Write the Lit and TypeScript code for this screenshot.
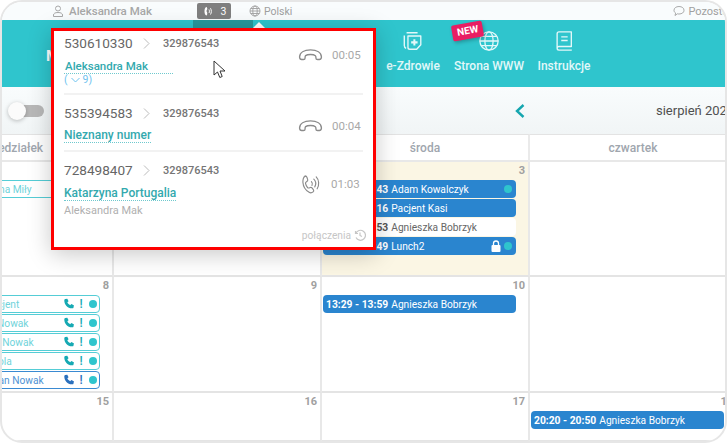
import { LitElement, html, css, svg } from "lit";
import { customElement } from "lit/decorators.js";

const hangup = svg`<path d="M1.500 9.500C1.500 5 6 2.500 12 2.500S22.500 5 22.500 9.500c0 1.600-.8 2.300-2 2.300h-1.700c-1 0-1.600-.6-1.600-1.500 0-1 .1-1.700-.5-2.200-1-.8-3-1.100-4.700-1.100s-3.700.3-4.700 1.100c-.6.5-.5 1.200-.5 2.200 0 .9-.6 1.500-1.600 1.500H3.500c-1.200 0-2-.7-2-2.300z" fill="none" stroke="currentColor" stroke-width="1.300"/>`;
const ring = svg`<path d="M7.500 1.500c1 0 1.500.5 1.900 1.700l.7 2.200c.2.800 0 1.300-.6 1.800l-1.100.9c-.5.400-.6.900-.5 1.500.3 1.400 1.200 3 2.100 4.100.4.500.9.600 1.500.4l1.300-.5c.7-.3 1.300-.1 1.800.5l1.400 1.800c.7 1 .6 1.700-.2 2.300-1.200 1-2.800 1.300-4.200.5-3.500-2-6.200-6.400-6.500-10.500-.1-3 .8-6.200 2.400-6.200z" fill="none" stroke="currentColor" stroke-width="1.200"/><path d="M14 7.500c1 1 1.300 2.700.6 4M16.500 5c2 2 2.400 5.500 1 8M19 2.500c3 3 3.400 8.500 1 12.500" fill="none" stroke="currentColor" stroke-width="1.200" stroke-linecap="round"/>`;
const phone = svg`<path d="M2.500 1.200 5 .8l1.500 3-1.400 1.300c.6 1.500 1.800 2.700 3.300 3.300l1.300-1.400 3 1.500-.4 2.500c-.2.700-.7 1-1.400 1C5.500 12.300 1.500 8 1.500 2.600c0-.7.300-1.200 1-1.400z" fill="currentColor"/>`;

interface Ev { time?: string; name: string; pad?: number; kind: "fill" | "plain" | "teal" | "blue"; dot?: boolean; lock?: boolean; icons?: boolean }
interface Cell { n?: string; today?: boolean; evs?: Ev[] }

const rows: Cell[][] = [
  [
    { evs: [{ time: "12:00 - 12:30", name: "Anna Miły", kind: "teal", pad: 12 }] },
    {},
    { n: "3", today: true, evs: [
      { time: "13:13 - 13:43", name: "Adam Kowalczyk", kind: "fill", dot: true },
      { time: "13:46 - 14:16", name: "Pacjent Kasi", kind: "fill" },
      { time: "14:23 - 14:53", name: "Agnieszka Bobrzyk", kind: "plain" },
      { time: "15:00 - 15:49", name: "Lunch2", kind: "fill", dot: true, lock: true },
    ] },
    {},
  ],
  [
    { n: "8", evs: [
      { time: "09:00 - 09:30", name: "Pacjent", pad: 10.500, kind: "teal", icons: true },
      { time: "09:30 - 10:00", name: "Jan Nowak", pad: 3, kind: "teal", icons: true },
      { time: "10:00 - 10:30", name: "Ewa Nowak", pad: 6, kind: "teal", icons: true },
      { time: "10:30 - 11:00", name: "Karola", pad: 8, kind: "teal", icons: true },
      { time: "11:00 - 11:30", name: "Adrian Nowak", pad: 5.500, kind: "blue", icons: true },
    ] },
    { n: "9" },
    { n: "10", evs: [{ time: "13:29 - 13:59", name: "Agnieszka Bobrzyk", kind: "fill" }] },
    {},
  ],
  [
    { n: "15" },
    { n: "16" },
    { n: "17" },
    { n: "18", evs: [{ time: "20:20 - 20:50", name: "Agnieszka Bobrzyk", kind: "fill" }] },
  ],
];

const calls = [
  { from: "530610330", who: "Aleksandra Mak", extra: true, time: "00:05", icon: hangup, cls: "r1" },
  { from: "535394583", who: "Nieznany numer", time: "00:04", icon: hangup, cls: "r2" },
  { from: "728498407", who: "Katarzyna Portugalia", sub: "Aleksandra Mak", time: "01:03", icon: ring, cls: "r3" },
];

@customElement("app-root")
export class AppRoot extends LitElement {
  static styles = css`
    :host { display: block; width: 727px; height: 443px; font-family: Roboto, "Liberation Sans", sans-serif; background: #fff; }
    * { box-sizing: border-box; }
    .frame { position: relative; width: 727px; height: 443px; overflow: hidden; border: 2px solid #e6e6e6; border-radius: 22px; background: #fff; }
    .top { height: 18px; background: #f9fcfd; display: flex; align-items: center; font-size: 11px; color: #a0a0a0; white-space: nowrap; }
    .u { display: flex; align-items: center; gap: 5px; margin-left: 50px; font-size: 11.500px; font-weight: 500; width: 145px; color: #a8a8a8; flex: none; }
    .u svg, .lang svg, .oth svg { width: 12px; height: 12px; flex: none; }
    .pill { width: 34px; height: 16px; background: #7f7f7f; border-radius: 2px; color: #fff; display: flex; align-items: center; justify-content: center; gap: 7px; font-size: 10.500px; flex: none; }
    .pill svg { width: 12px; height: 11px; }
    .lang { display: flex; align-items: center; gap: 3px; margin-left: 18px; font-size: 10.500px; flex: none; }
    .oth { display: flex; align-items: center; gap: 3px; margin-left: 381px; font-size: 11px; flex: none; }
    .nav { height: 67px; background: #2fc5cd; display: flex; color: #fff; padding-left: 44px; position: relative; }
    .m { font-size: 15px; font-weight: 700; margin-top: 27px; width: 329px; flex: none; }
    .item { display: flex; flex-direction: column; align-items: center; position: relative; padding-top: 10px; font-size: 12px; font-weight: 500; color: #e2f8f9; white-space: nowrap; line-height: 14px; flex: none; }
    .item svg { width: 22px; height: 22px; margin-bottom: 7px; display: block; }
    .i1 { width: 76px; } .i2 { width: 76px; } .i3 { width: 74px; }
    .new { position: absolute; left: 1px; top: 3px; background: #e91e63; color: #fff; font-size: 10px; font-weight: 700; line-height: 14px; padding: 1px 5px; border-radius: 2px; transform: rotate(-10deg); box-shadow: 1px 2px 4px rgba(0,0,0,.25); }
    .active { position: absolute; left: 191px; top: 0; width: 60px; height: 8px; background: #27989c; }
    .tri { position: absolute; left: 251px; top: 2px; width: 0; height: 0; border: 6px solid transparent; border-top: 0; border-bottom: 6px solid #fff; }
    .sub { height: 47px; background: linear-gradient(#f9fcfd, #f1f5f6); display: flex; align-items: center; padding: 0 0 0 6px; position: relative; }
    .toggle { width: 36px; height: 18px; position: relative; display: flex; align-items: center; justify-content: flex-end; flex: none; }
    .track { width: 28px; height: 12px; background: #b8b8b8; border-radius: 6px; }
    .knob { position: absolute; left: 0; top: 0; width: 18px; height: 18px; border-radius: 50%; background: #fbfbfb; box-shadow: 0 1px 4px rgba(0,0,0,.25); }
    .chev { margin-left: 470px; width: 12px; height: 16px; color: #15a6af; flex: none; }
    .month { margin-left: 130px; font-size: 13px; color: #505050; white-space: nowrap; flex: none; }
    .cal { margin-left: -96px; width: 832px; }
    .cols { display: grid; grid-template-columns: repeat(4, 208px); }
    .hd { height: 28px; border-top: 1px solid #e3e3e3; border-bottom: 2px solid #e8e8e8; border-right: 2px solid #eaeaea; display: flex; align-items: center; justify-content: center; font-size: 12px; font-weight: 500; color: #a0a6ae; }
    .cell { border-right: 2px solid #e8e8e8; border-bottom: 2px solid #e4e4e4; padding: 0 0 0 1px; min-width: 0; overflow: hidden; }
    .h1 { height: 115px; } .h2 { height: 116px; } .h3 { height: 49px; }
    .cell.today { background: #fbf6e4; }
    .n { height: 18px; line-height: 18px; text-align: right; padding-right: 3px; font-size: 11px; font-weight: 700; color: #a0a0a0; }
    .evs { display: flex; flex-direction: column; gap: 1px; padding-right: 12px; }
    .ev { height: 18px; border-radius: 4px; display: flex; align-items: center; padding-left: 3px; padding-right: 4px; font-size: 10.300px; white-space: nowrap; overflow: hidden; }
    .ev b { font-weight: 700; margin-right: 3px; }
    .name { flex: 1; min-width: 0; font-size: 10.200px; }
    .fill { background: #2a85cf; color: #fff; }
    .plain { background: #fff; color: #666; }
    .plain b { color: #555; }
    .teal { border: 1.500px solid #55cdd6; background: #fff; color: #6fd3da; padding-left: 1.500px; padding-right: 2px; }
    .teal b { visibility: hidden; }
    .blue { border: 1.500px solid #3a8ad2; background: #fff; color: #4e92d4; padding-left: 1.500px; padding-right: 2px; }
    .blue b { visibility: hidden; }
    .icons { display: flex; align-items: center; gap: 3px; color: #16a9b3; }
    .blue .icons { color: #2a70bd; }
    .icons svg { width: 12px; height: 12px; }
    .bang { width: 6px; text-align: center; font-weight: 500; font-size: 12px; margin-right: 2px; }
    .dot { width: 8px; height: 8px; border-radius: 50%; background: #2fc5cd; flex: none; margin-left: 3px; }
    .lock { width: 10px; height: 12px; flex: none; color: #fff; }
    .pop { position: absolute; left: 49px; top: 26px; width: 325px; height: 222px; background: #fff; border: 3px solid #fe0000; padding: 0 10px; box-shadow: 0 4px 22px rgba(0,0,0,.22); display: flex; flex-direction: column; }
    .call { display: flex; align-items: center; border-bottom: 2px solid #f2f2f2; }
    .call.r1 { height: 64px; } .call.r2 { height: 57px; }
    .call.r3 { height: 77px; border-bottom: 0; align-items: flex-start; padding-top: 8px; }
    .info { width: 234px; align-self: flex-start; flex: none; }
    .r1 .info { padding-top: 2px; } .r2 .info { padding-top: 8px; } .r3 .info { padding-top: 0; }
    .nums { display: flex; align-items: center; height: 20px; color: #666; }
    .from { font-size: 13.600px; width: 78px; }
    .arr { width: 21px; height: 11px; color: #bbb; }
    .to { font-size: 11px; font-weight: 500; color: #757575; }
    .who { display: inline-block; margin-top: 6px; font-size: 12px; font-weight: 500; color: #33a9ae; border-bottom: 1px dotted #6fc9ce; line-height: 14px; }
    .r1 .who { width: 109px; padding-left: 1px; font-size: 11.500px; }
    .r2 .who { margin-top: 5px; }
    .more { font-size: 10.500px; color: #6fc3ef; line-height: 11px; display: flex; align-items: center; gap: 2px; }
    .more svg { width: 9px; height: 6px; margin: 0 1px; }
    .subn { font-size: 11px; color: #b0b0b0; margin-top: 3px; }
    .right { display: flex; align-items: center; color: #a8a8a8; font-size: 11.500px; }
    .right svg { width: 25px; height: 15px; color: #8b8b8b; margin-right: 9px; flex: none; }
    .r1 .right { margin-top: -15px; } .r2 .right { margin-top: 6px; }
    .r3 .right { margin-top: 13px; }
    .r3 .right svg { width: 23px; height: 22px; margin-right: 10px; }
    .hist { display: flex; justify-content: flex-end; align-items: center; gap: 3px; font-size: 10.200px; color: #c6c6c6; margin: 0 -3px 0 0; }
    .hist svg { width: 12px; height: 12px; }
    .cur { position: absolute; left: 211px; top: 58px; width: 14px; height: 20px; }
  `;

  private ev(e: Ev) {
    return html`<div class="ev ${e.kind}">
      <b>${e.time}</b><span class="name" style="padding-left:${e.pad ?? 0}px">${e.name}</span>
      ${e.lock ? html`<svg class="lock" viewBox="0 0 10 12"><path d="M2.500 5V3.500a2.500 2.500 0 0 1 5 0V5" fill="none" stroke="currentColor" stroke-width="1.300"/><rect x="0.500" y="5" width="9" height="7" rx="1" fill="currentColor"/></svg>` : ""}
      ${e.dot ? html`<span class="dot"></span>` : ""}
      ${e.icons ? html`<span class="icons"><svg viewBox="0 0 14 14">${phone}</svg><span class="bang">!</span><span class="dot" style="margin-left:0"></span></span>` : ""}
    </div>`;
  }

  render() {
    return html`<div class="frame">
      <div class="top">
        <div class="u"><svg viewBox="0 0 12 12" fill="none" stroke="currentColor"><circle cx="6" cy="3.500" r="2.500"/><path d="M1.500 11.500V10c0-1.500 1.500-2.500 4.500-2.500s4.500 1 4.500 2.500v1.500z"/></svg>Aleksandra Mak</div>
        <div class="pill"><svg viewBox="0 0 24 20" fill="currentColor"><path d="M9 1c1 0 1.500 2 1.500 4S9 7 9 9s1.500 2 1.500 4-.5 5-1.500 5C6 18 5 13 5 9.500S6 1 9 1z"/><path d="M14 6c1.200 2 1.200 5 0 7M17 3.500c2.200 3.500 2.200 9 0 12.500" fill="none" stroke="currentColor" stroke-width="2"/></svg>3</div>
        <div class="lang"><svg viewBox="0 0 12 12" fill="none" stroke="currentColor" stroke-width=".9"><circle cx="6" cy="6" r="5"/><ellipse cx="6" cy="6" rx="2.200" ry="5"/><path d="M1 6h10M1.700 3.500h8.600M1.700 8.500h8.600"/></svg>Polski</div>
        <div class="oth"><svg viewBox="0 0 12 12" fill="none" stroke="currentColor" stroke-width=".9"><path d="M6 1.500c3 0 5 1.600 5 3.800S9 9 6 9c-.6 0-1.100 0-1.600-.2L2 10.500l.6-2.400C1.600 7.400 1 6.400 1 5.300 1 3.100 3 1.500 6 1.500z"/></svg>Pozostałe</div>
      </div>
      <div class="nav">
        <div class="active"></div><div class="tri"></div>
        <div class="m">M</div>
        <div class="item i1"><svg viewBox="0 0 24 24" fill="none" stroke="currentColor" stroke-width="1.500"><path d="M5 3h12M2.500 6v11c0 1.500.8 2.500 2 3"/><path d="M6.500 6.500h14v9.500l-4.500 5h-7.500a2 2 0 0 1-2-2z" stroke-linejoin="round"/><path d="M13.500 10v7M10 13.500h7" stroke-width="2.200"/></svg>e-Zdrowie</div>
        <div class="item i2"><svg viewBox="0 0 24 24" fill="none" stroke="currentColor" stroke-width="1.400"><circle cx="12" cy="12" r="10"/><ellipse cx="12" cy="12" rx="4.500" ry="10"/><path d="M2 12h20M3.500 7h17M3.500 17h17"/></svg>Strona WWW<span class="new">NEW</span></div>
        <div class="item i3"><svg viewBox="0 0 24 24" fill="none" stroke="currentColor" stroke-width="1.500"><path d="M4.500 19.500V4a2 2 0 0 1 2-2h13.500v16H6.500a2 2 0 0 0-2 2 2 2 0 0 0 2 2h14" stroke-linejoin="round"/><path d="M9 7.500h7M9 11.500h7"/></svg>Instrukcje</div>
      </div>
      <div class="sub">
        <div class="toggle"><div class="track"></div><div class="knob"></div></div>
        <svg class="chev" viewBox="0 0 12 16" fill="none" stroke="currentColor" stroke-width="2.400"><path d="M9.500 2 3 8l6.500 6"/></svg>
        <div class="month">sierpień 2023</div>
      </div>
      <div class="cal">
        <div class="cols">
          ${["poniedziałek", "wtorek", "środa", "czwartek"].map((d, i) => html`<div class="hd">${i === 1 ? "" : d}</div>`)}
        </div>
        ${rows.map((r, ri) => html`<div class="cols">
          ${r.map((c) => html`<div class="cell h${ri + 1} ${c.today ? "today" : ""}">
            <div class="n">${c.n ?? ""}</div>
            <div class="evs">${(c.evs ?? []).map((e) => this.ev(e))}</div>
          </div>`)}
        </div>`)}
      </div>
      <div class="pop">
        ${calls.map((c) => html`<div class="call ${c.cls}">
          <div class="info">
            <div class="nums"><span class="from">${c.from}</span>
              <svg class="arr" viewBox="0 0 21 11" fill="none" stroke="currentColor"><path d="M2 .500l5 5-5 5"/></svg>
              <span class="to">329876543</span></div>
            <span class="who">${c.who}</span>
            ${c.extra ? html`<div class="more">(<svg viewBox="0 0 9 6" fill="none" stroke="currentColor"><path d="M.500 1l4 4 4-4"/></svg> 9)</div>` : ""}
            ${c.sub ? html`<div class="subn">${c.sub}</div>` : ""}
          </div>
          <div class="right"><svg viewBox="0 0 24 ${c.icon === ring ? 20 : 14}">${c.icon}</svg>${c.time}</div>
        </div>`)}
        <div class="hist">połączenia<svg viewBox="0 0 12 12" fill="none" stroke="currentColor" stroke-width="1.200"><path d="M1.500 2v2.500H4"/><path d="M1.800 4.500A5 5 0 1 1 2 8.500"/><path d="M6 3.500V6.500l2 1"/></svg></div>
      </div>
      <svg class="cur" viewBox="0 0 14 20"><path d="M1 1v14l3.500-3 2.300 5.500 2.400-1L7 11h5z" fill="#fff" stroke="#333" stroke-width="1"/></svg>
    </div>`;
  }
}
